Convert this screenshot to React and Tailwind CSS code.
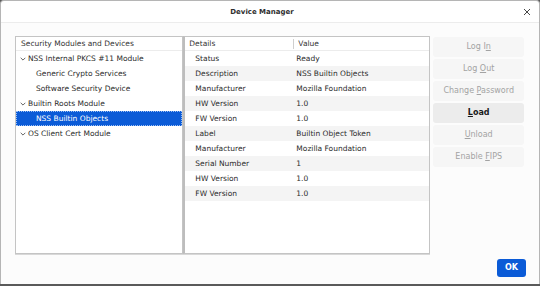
import React from "react";

const font = { fontFamily: '"DejaVu Sans", "Liberation Sans", sans-serif' };

const tree = [
  { label: "NSS Internal PKCS #11 Module", level: 0 },
  { label: "Generic Crypto Services", level: 1 },
  { label: "Software Security Device", level: 1 },
  { label: "Builtin Roots Module", level: 0 },
  { label: "NSS Builtin Objects", level: 1, selected: true },
  { label: "OS Client Cert Module", level: 0 },
];

const details = [
  ["Status", "Ready"],
  ["Description", "NSS Builtin Objects"],
  ["Manufacturer", "Mozilla Foundation"],
  ["HW Version", "1.0"],
  ["FW Version", "1.0"],
  ["Label", "Builtin Object Token"],
  ["Manufacturer", "Mozilla Foundation"],
  ["Serial Number", "1"],
  ["HW Version", "1.0"],
  ["FW Version", "1.0"],
];

function Chevron() {
  return (
    <svg width="6" height="4" viewBox="0 0 6 4" className="shrink-0">
      <path d="M0.7 0.8 L3 3.1 L5.3 0.8" fill="none" stroke="#555" strokeWidth="0.9" />
    </svg>
  );
}

function SideButton({ pre, key1, post, enabled }) {
  return (
    <div
      className={
        "h-[20px] flex items-center justify-center text-[8px] rounded-[3px] " +
        (enabled ? "bg-[#ececec] text-[#1a1a1a] font-bold" : "bg-[#f6f6f6] text-[#a3a3a3]")
      }
    >
      <span>
        {pre}
        <span className="underline">{key1}</span>
        {post}
      </span>
    </div>
  );
}

export default function App() {
  return (
    <div
      className="w-[540px] h-[286px] bg-[#5a5a5a] flex flex-col overflow-hidden"
      style={font}
    >
      <div className="flex-1 bg-white border-l border-r border-t border-[#b5b5b5] rounded-t-[4px] flex flex-col mb-[2px]">
        {/* title bar */}
        <div className="h-[22px] shrink-0 flex items-center justify-center relative border-b border-[#ececec] pr-[16px]">
          <span className="text-[7px] font-bold text-[#2e2e2e] pt-[1px]">Device Manager</span>
          <svg className="absolute right-[8px] top-[7px]" width="8" height="8" viewBox="0 0 8 8">
            <path d="M1 1 L7 7 M7 1 L1 7" stroke="#333" strokeWidth="0.9" />
          </svg>
        </div>

        {/* content */}
        <div className="flex-1 flex flex-col bg-[#fcfcfc] pl-[14px] pr-[15px] pt-[13px]">
          <div className="flex h-[218px]">
            {/* tree */}
            <div className="w-[169px] bg-white border border-[#c4c4c4] shadow-[0_1px_0_#d8d8d8] flex flex-col text-[7.5px] text-[#2b2b2b]">
              <div className="h-[14px] flex items-center pl-[5px] border-b border-[#ececec] text-[#333]">
                Security Modules and Devices
              </div>
              {tree.map((r, i) => (
                <div
                  key={i}
                  className={
                    "h-[15px] flex items-center gap-[2px] " +
                    (r.selected
                      ? "bg-[#0b5bd7] text-white outline outline-1 outline-dotted outline-[#9cc0f5] -outline-offset-1"
                      : "")
                  }
                  style={{ paddingLeft: r.level === 0 ? 4 : 20 }}
                >
                  {r.level === 0 && <Chevron />}
                  <span>{r.label}</span>
                </div>
              ))}
            </div>

            {/* details */}
            <div className="w-[248px] bg-white border border-[#c4c4c4] border-l-2 border-l-[#bdbdbd] shadow-[0_1px_0_#d8d8d8] flex flex-col text-[7.5px] text-[#2b2b2b]">
              <div className="h-[14px] flex items-center border-b border-[#ececec] text-[#333]">
                <div className="w-[109px] pl-[4px] border-r border-[#cfcfcf] h-[10px] flex items-center">Details</div>
                <div className="pl-[4px]">Value</div>
              </div>
              {details.map(([k, v], i) => (
                <div
                  key={i}
                  className={"h-[15px] flex items-center " + (i % 2 === 1 ? "bg-[#f4f4f4]" : "")}
                >
                  <div className="w-[110px] pl-[10px]">{k}</div>
                  <div className="pl-[1px]">{v}</div>
                </div>
              ))}
            </div>

            {/* buttons */}
            <div className="ml-[3px] w-[91px] flex flex-col gap-[2px] pt-[1px]">
              <SideButton pre="Log I" key1="n" post="" />
              <SideButton pre="Log " key1="O" post="ut" />
              <SideButton pre="Change " key1="P" post="assword" />
              <SideButton pre="" key1="L" post="oad" enabled />
              <SideButton pre="" key1="U" post="nload" />
              <SideButton pre="Enable " key1="F" post="IPS" />
            </div>
          </div>

          <div className="flex justify-end mt-[5px]">
            <div className="w-[29px] h-[18px] -mr-[2px] bg-[#0b5bd7] rounded-[3px] flex items-center justify-center text-white text-[8px] font-bold">
              OK
            </div>
          </div>
        </div>
      </div>
    </div>
  );
}
